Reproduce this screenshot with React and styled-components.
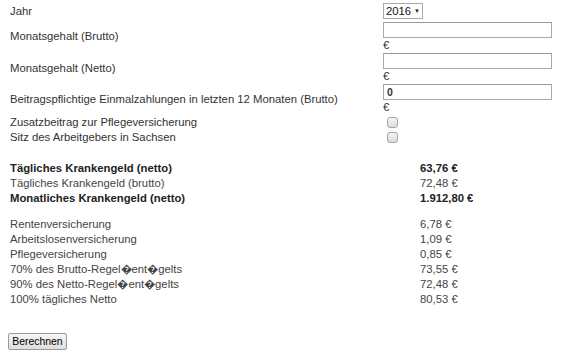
import React from "react";
import styled, { createGlobalStyle } from "styled-components";

const Global = createGlobalStyle`
  html, body { margin: 0; padding: 0; background: #fff; }
  body {
    font-family: "Liberation Sans", Arial, sans-serif;
    font-size: 11.3px;
    color: #333;
  }
`;

const Page = styled.div`
  padding: 3px 8px 0 10px;
  width: 562px;
  box-sizing: border-box;
`;

const FormGrid = styled.div`
  display: grid;
  grid-template-columns: 373px 1fr;
  row-gap: 1px;
  align-items: center;
`;

const Label = styled.div`
  line-height: 14px;
  grid-column: 1;
`;

const Field = styled.div`
  grid-column: 2;
  display: flex;
  flex-direction: column;
  align-items: flex-start;
  margin-top: ${(p) => p.$mt || 0}px;
`;

const SelectBox = styled.div`
  display: flex;
  align-items: center;
  width: 40px;
  height: 16px;
  box-sizing: border-box;
  border: 1px solid #a9a9a9;
  background: #fff;
`;

const Select = styled.select`
  appearance: none;
  border: none;
  background: transparent;
  font: inherit;
  color: #111;
  padding: 0 0 0 2px;
  width: 29px;
  height: 14px;
  line-height: 14px;
  outline: none;
`;

const Arrow = styled.span`
  font-size: 6px;
  color: #222;
  line-height: 14px;
  margin-left: 1px;
`;

const TextInput = styled.input`
  width: 169px;
  height: 16px;
  box-sizing: border-box;
  border: 1px solid #a9a9a9;
  border-top-color: #999;
  padding: 0 3px;
  font: inherit;
  font-weight: bold;
  font-size: 10.5px;
  color: #333;
  background: #fff;
  outline: none;
`;

const Euro = styled.span`
  line-height: 14px;
  height: 14px;
  color: #333;
`;

const CheckCell = styled.div`
  grid-column: 2;
  height: 14px;
  display: flex;
  align-items: center;
`;

const Check = styled.input`
  appearance: none;
  margin: 0 0 0 4px;
  width: 11px;
  height: 11px;
  box-sizing: border-box;
  border: 1px solid #a6a6a6;
  border-radius: 3px;
  background: linear-gradient(#f4f4f4, #dcdcdc);
`;

const ResultGrid = styled.div`
  display: grid;
  grid-template-columns: 410px 1fr;
  margin-top: ${(p) => p.$mt}px;
  line-height: 15px;
`;

const RLabel = styled.div`
  font-weight: ${(p) => (p.$bold ? "bold" : "normal")};
  color: ${(p) => (p.$bold ? "#222" : "#444")};
`;

const RValue = styled.div`
  font-weight: ${(p) => (p.$bold ? "bold" : "normal")};
  color: ${(p) => (p.$bold ? "#222" : "#444")};
`;

const Button = styled.button`
  margin: 26px 0 0 -2px;
  height: 17px;
  width: 59px;
  padding: 0;
  font: inherit;
  font-size: 10.4px;
  color: #000;
  border: 1px solid #9a9a9a;
  border-radius: 2px;
  background: linear-gradient(#f6f6f6, #dedede);
  line-height: 13px;
`;

const results1 = [
  ["Tägliches Krankengeld (netto)", "63,76 €", true],
  ["Tägliches Krankengeld (brutto)", "72,48 €", false],
  ["Monatliches Krankengeld (netto)", "1.912,80 €", true],
];

const results2 = [
  ["Rentenversicherung", "6,78 €"],
  ["Arbeitslosenversicherung", "1,09 €"],
  ["Pflegeversicherung", "0,85 €"],
  ["70% des Brutto-Regel\uFFFDent\uFFFDgelts", "73,55 €"],
  ["90% des Netto-Regel\uFFFDent\uFFFDgelts", "72,48 €"],
  ["100% tägliches Netto", "80,53 €"],
];

export default function App() {
  return (
    <Page>
      <Global />
      <FormGrid>
        <Label>Jahr</Label>
        <Field>
          <SelectBox>
            <Select defaultValue="2016">
              <option>2016</option>
              <option>2015</option>
            </Select>
            <Arrow>▼</Arrow>
          </SelectBox>
        </Field>

        <Label>Monatsgehalt (Brutto)</Label>
        <Field $mt={2}>
          <TextInput type="text" defaultValue="" />
          <Euro>€</Euro>
        </Field>

        <Label>Monatsgehalt (Netto)</Label>
        <Field>
          <TextInput type="text" defaultValue="" />
          <Euro>€</Euro>
        </Field>

        <Label>Beitragspflichtige Einmalzahlungen in letzten 12 Monaten (Brutto)</Label>
        <Field>
          <TextInput type="text" defaultValue="0" />
          <Euro>€</Euro>
        </Field>

        <Label>Zusatzbeitrag zur Pflegeversicherung</Label>
        <CheckCell>
          <Check type="checkbox" />
        </CheckCell>

        <Label>Sitz des Arbeitgebers in Sachsen</Label>
        <CheckCell>
          <Check type="checkbox" />
        </CheckCell>
      </FormGrid>

      <ResultGrid $mt={17}>
        {results1.map(([l, v, b]) => (
          <React.Fragment key={l}>
            <RLabel $bold={b}>{l}</RLabel>
            <RValue $bold={b}>{v}</RValue>
          </React.Fragment>
        ))}
      </ResultGrid>

      <ResultGrid $mt={11}>
        {results2.map(([l, v]) => (
          <React.Fragment key={l}>
            <RLabel>{l}</RLabel>
            <RValue>{v}</RValue>
          </React.Fragment>
        ))}
      </ResultGrid>

      <Button type="button">Berechnen</Button>
    </Page>
  );
}
